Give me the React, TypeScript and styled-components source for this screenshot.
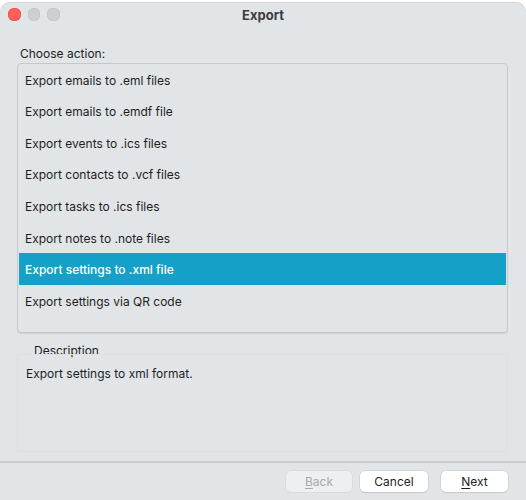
import React, { useState } from 'react'
import styled, { createGlobalStyle } from 'styled-components'

const GlobalStyle = createGlobalStyle`
  html, body {
    margin: 0;
    padding: 0;
    background: #ffffff;
  }
  body {
    font-family: Inter, "Liberation Sans", Arial, sans-serif;
    -webkit-font-smoothing: antialiased;
  }
`

const Window = styled.div`
  width: 526px;
  height: 498px;
  margin-top: 2px;
  background-color: #e1e5e8;
  border-radius: 10px 10px 0 0;
  box-shadow: inset 0 1px 0 #d3d7da;
  display: flex;
  flex-direction: column;
  overflow: hidden;
  color: #1e1e1e;
  font-size: 12px;
`

const TitleBar = styled.div`
  height: 25px;
  display: flex;
  align-items: center;
  position: relative;
  flex-shrink: 0;
`

const Lights = styled.div`
  display: flex;
  gap: 7px;
  padding-left: 8px;
`

const Light = styled.span<{ $color: string; $border: string }>`
  width: 12.5px;
  height: 12.5px;
  border-radius: 50%;
  background-color: ${(p) => p.$color};
  box-shadow: inset 0 0 0 0.5px ${(p) => p.$border};
`

const Title = styled.div`
  position: absolute;
  left: 0;
  right: 0;
  text-align: center;
  font-weight: 700;
  font-size: 13px;
  color: #3b3d3f;
  pointer-events: none;
`

const Body = styled.div`
  flex: 1;
  display: flex;
  flex-direction: column;
  padding: 18px 18px 0 17px;
  min-height: 0;
`

const Label = styled.div`
  padding-left: 3px;
  height: 19px;
  line-height: 17px;
`

const List = styled.div`
  height: 268px;
  border: 1px solid #c5c9cc;
  border-radius: 4px;
  box-shadow: 0 1px 0 #cfd3d6;
  display: flex;
  flex-direction: column;
  padding: 0 1px;
  flex-shrink: 0;
`

const Row = styled.div<{ $selected: boolean }>`
  height: 31.6px;
  line-height: 29.6px;
  padding: 2px 0 0 6px;
  box-sizing: border-box;
  background-color: ${(p) => (p.$selected ? '#15a0c7' : 'transparent')};
  color: ${(p) => (p.$selected ? '#ffffff' : '#1e1e1e')};
  font-weight: ${(p) => (p.$selected ? 500 : 400)};
  cursor: default;
  white-space: nowrap;
`

const DescLabel = styled.div`
  padding: 9px 0 0 17px;
  height: 12px;
  line-height: 17px;
`

const DescBox = styled.div`
  height: 92px;
  border: 1px solid #dce0e2;
  border-radius: 2px;
  padding: 11px 0 0 8px;
`

const Footer = styled.div`
  height: 37px;
  border-top: 2px solid #c9ced2;
  margin-top: 9px;
  display: flex;
  justify-content: flex-end;
  align-items: center;
  gap: 8px;
  padding-right: 18px;
  flex-shrink: 0;
`

const Button = styled.button<{ $width: number; $gap?: number }>`
  width: ${(p) => p.$width}px;
  height: 21px;
  margin-left: ${(p) => p.$gap ?? 0}px;
  border: none;
  border-radius: 5px;
  background-color: #ffffff;
  box-shadow: 0 0 0 0.5px #c3c7ca, 0 1px 1px rgba(0, 0, 0, 0.12);
  font-family: inherit;
  font-size: 12px;
  color: #1e1e1e;
  padding: 0;

  &:disabled {
    background-color: #edf0f1;
    color: #a6aaad;
    box-shadow: 0 0 0 0.5px #d2d6d8;
  }

  u {
    text-decoration-thickness: 1px;
    text-underline-offset: 2px;
  }
`

const actions = [
  'Export emails to .eml files',
  'Export emails to .emdf file',
  'Export events to .ics files',
  'Export contacts to .vcf files',
  'Export tasks to .ics files',
  'Export notes to .note files',
  'Export settings to .xml file',
  'Export settings via QR code',
]

export default function App() {
  const [selected, setSelected] = useState(6)

  return (
    <>
      <GlobalStyle />
      <Window>
        <TitleBar>
          <Lights>
            <Light $color="#fe5f57" $border="#e0443e" />
            <Light $color="#cdd0d3" $border="#b9bcbf" />
            <Light $color="#cdd0d3" $border="#b9bcbf" />
          </Lights>
          <Title>Export</Title>
        </TitleBar>
        <Body>
          <Label>Choose action:</Label>
          <List>
            {actions.map((a, i) => (
              <Row key={a} $selected={i === selected} onClick={() => setSelected(i)}>
                {a}
              </Row>
            ))}
          </List>
          <DescLabel>Description</DescLabel>
          <DescBox>Export settings to xml format.</DescBox>
        </Body>
        <Footer>
          <Button $width={66} disabled>
            <u>B</u>ack
          </Button>
          <Button $width={68}>Cancel</Button>
          <Button $width={67} $gap={5}>
            <u>N</u>ext
          </Button>
        </Footer>
      </Window>
    </>
  )
}
